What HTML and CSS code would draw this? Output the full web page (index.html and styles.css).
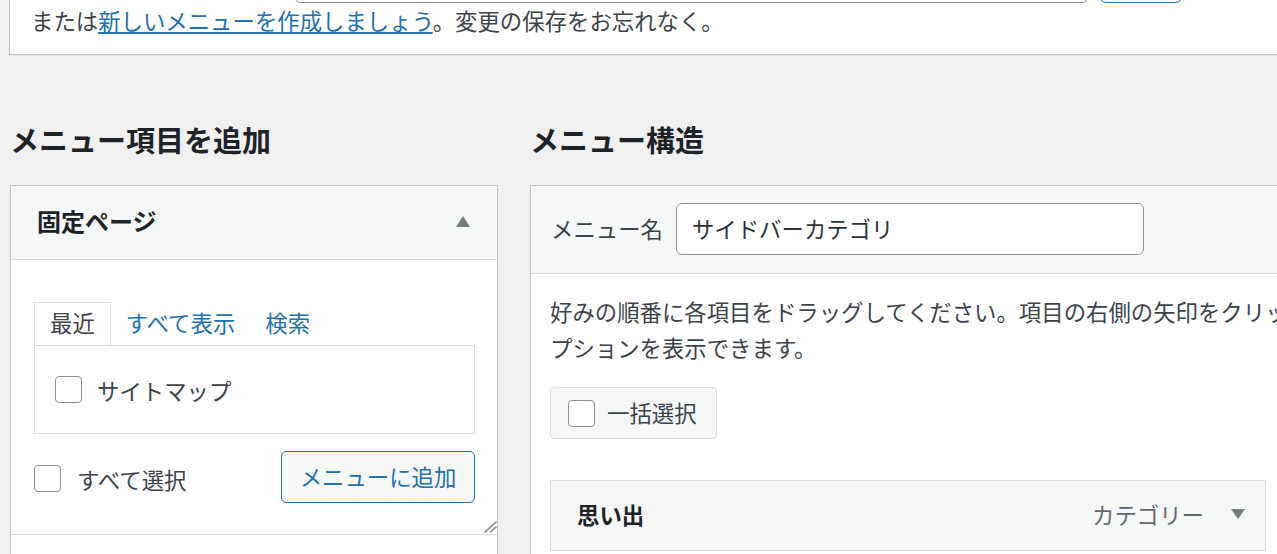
FILE: index.html
```html
<!DOCTYPE html>
<html lang="ja">
<head>
<meta charset="utf-8">
<title>メニュー</title>
<link rel="stylesheet" href="styles.css">
</head>
<body>
<div class="wrap">
  <div class="manage">
    <div class="manage-row">
      <span class="select-box"></span>
      <span class="select-btn"></span>
    </div>
    <p class="manage-text">または<a href="#" class="link">新しいメニューを作成しましょう</a>。変更の保存をお忘れなく。</p>
  </div>

  <div class="columns">
    <div class="side-col">
      <h2 class="col-title">メニュー項目を追加</h2>
      <div class="accordion">
        <div class="acc-title">
          <h3 class="acc-heading">固定ページ</h3>
          <span class="tri-up"></span>
        </div>
        <div class="acc-content">
          <ul class="tabs">
            <li class="tab tab-active">最近</li>
            <li class="tab"><a href="#" class="tab-link">すべて表示</a></li>
            <li class="tab"><a href="#" class="tab-link">検索</a></li>
          </ul>
          <div class="tab-panel">
            <label class="check-label"><span class="cb"></span>サイトマップ</label>
          </div>
          <div class="acc-actions">
            <label class="check-label select-all"><span class="cb"></span>すべて選択</label>
            <button class="btn-add" type="button">メニューに追加</button>
          </div>
          <svg class="resize" width="13" height="12" viewBox="0 0 13 12">
            <line x1="0.5" y1="11.5" x2="12.5" y2="0.5" stroke="#8c8f94" stroke-width="1.6"/>
            <line x1="6" y1="11.5" x2="12.5" y2="5.5" stroke="#8c8f94" stroke-width="1.6"/>
          </svg>
        </div>
        <div class="acc-next"></div>
      </div>
    </div>

    <div class="main-col">
      <h2 class="col-title">メニュー構造</h2>
      <div class="menu-edit">
        <div class="menu-header">
          <label class="menu-name-label">メニュー名</label>
          <input class="menu-name" type="text" value="サイドバーカテゴリ">
        </div>
        <div class="menu-body">
          <p class="instructions">好みの順番に各項目をドラッグしてください。項目の右側の矢印をクリックすると、追加の設定オプションを表示できます。</p>
          <label class="bulk"><span class="cb"></span>一括選択</label>
          <div class="menu-item">
            <span class="item-title">思い出</span>
            <span class="item-controls">
              <span class="item-type">カテゴリー</span>
              <span class="tri-down"></span>
            </span>
          </div>
        </div>
      </div>
    </div>
  </div>
</div>
</body>
</html>
```

FILE: styles.css
```css
html, body {
  margin: 0;
  padding: 0;
}
body {
  background: #f0f0f1;
  color: #3c434a;
  font-family: "Noto Sans CJK JP", "Noto Sans", sans-serif;
  font-size: 22.4px;
  overflow: hidden;
}
.wrap {
  width: 1600px;
}

/* top manage box */
.manage {
  margin: -60px 0 0 9px;
  padding: 0 0 16px 21px;
  background: #fff;
  border: 1px solid #c3c4c7;
  box-shadow: 0 1px 1px rgba(0,0,0,.04);
}
.manage-row {
  height: 62px;
  display: flex;
  align-items: flex-end;
}
.select-box {
  margin-left: 264px;
  width: 793px;
  height: 50px;
  box-sizing: border-box;
  border: 1px solid #8c8f94;
  border-radius: 5px;
}
.select-btn {
  margin-left: 12px;
  width: 82px;
  height: 50px;
  box-sizing: border-box;
  border: 1px solid #2271b1;
  border-radius: 6px;
  background: #f6f7f7;
}
.manage-text {
  margin: -1px 0 0;
  line-height: 36px;
}
.link {
  color: #2271b1;
  text-decoration: underline;
}

/* columns */
.columns {
  display: flex;
  gap: 32px;
  margin-left: 10px;
}
.side-col {
  width: 488px;
  flex: none;
}
.main-col {
  width: 1040px;
  flex: none;
}
.col-title {
  margin: 64px 0 26px;
  font-size: 29px;
  line-height: 40px;
  font-weight: 700;
  color: #1d2327;
}

/* accordion */
.accordion {
  background: #fff;
  border: 1px solid #c3c4c7;
  height: 420px;
}
.acc-title {
  box-sizing: border-box;
  height: 74px;
  padding: 0 27px 3px 26px;
  background: #f6f7f7;
  border-bottom: 1px solid #dcdcde;
  display: flex;
  align-items: center;
  justify-content: space-between;
}
.acc-heading {
  margin: 0;
  font-size: 24px;
  font-weight: 700;
  color: #1d2327;
  line-height: 36px;
}
.tri-up {
  width: 0;
  height: 0;
  border-left: 7px solid transparent;
  border-right: 7px solid transparent;
  border-bottom: 11px solid #787c82;
}
.acc-content {
  position: relative;
  padding: 42px 22px 31px 23px;
  border-bottom: 1px solid #dcdcde;
}
.tabs {
  list-style: none;
  margin: 0;
  padding: 0;
  display: flex;
}
.tab {
  padding: 0 14px 3px;
  line-height: 39px;
  border: 1px solid transparent;
  border-bottom: 0;
}
.tab-active {
  padding: 0 15px 3px;
  border-color: #dcdcde;
  color: #3c434a;
}
.tab-link {
  color: #2271b1;
  text-decoration: none;
}
.tab-panel {
  height: 87px;
  border: 1px solid #dcdcde;
  display: flex;
  align-items: center;
  padding-left: 20px;
}
.check-label {
  display: flex;
  align-items: center;
  gap: 15px;
  line-height: 36px;
}
.cb {
  width: 27px;
  height: 27px;
  box-sizing: border-box;
  border: 1px solid #8c8f94;
  border-radius: 4px;
  background: #fff;
  flex: none;
}
.acc-actions {
  margin-top: 17px;
  height: 52px;
  display: flex;
  align-items: center;
  justify-content: space-between;
}
.select-all {
  gap: 16px;
  margin-top: 3px;
}
.btn-add {
  width: 194px;
  height: 52px;
  box-sizing: border-box;
  border: 1px solid #2271b1;
  border-radius: 5px;
  background: #f6f7f7;
  color: #2271b1;
  font-family: inherit;
  font-size: 22.4px;
  line-height: 36px;
  padding: 0 0 3px;
}
.resize {
  position: absolute;
  right: 0;
  bottom: 1px;
}
.acc-next {
  height: 60px;
}

/* menu structure */
.menu-edit {
  background: #fff;
  border: 1px solid #c3c4c7;
  height: 420px;
}
.menu-header {
  background: #f6f7f7;
  border-bottom: 1px solid #dcdcde;
  padding: 17px 20px 18px;
  display: flex;
  align-items: center;
}
.menu-name-label {
  margin-right: 13px;
  line-height: 36px;
  margin-top: -2px;
}
.menu-name {
  width: 468px;
  height: 52px;
  box-sizing: border-box;
  border: 1px solid #8c8f94;
  border-radius: 6px;
  padding: 0 15px 2px;
  font-family: inherit;
  font-size: 22.4px;
  color: #2c3338;
  background: #fff;
}
.menu-body {
  padding: 19px 19px;
}
.instructions {
  margin: 0;
  line-height: 36px;
  width: 996px;
}
.bulk {
  margin-top: 22px;
  display: inline-flex;
  align-items: center;
  gap: 12px;
  height: 52px;
  box-sizing: border-box;
  padding: 0 19px 2px 17px;
  background: #f6f7f7;
  border: 1px solid #dcdcde;
  border-radius: 4px;
  color: #3c434a;
}
.bulk .cb {
  margin-top: 2px;
}
.menu-item {
  margin-top: 41px;
  width: 716px;
  height: 71px;
  box-sizing: border-box;
  background: #f6f7f7;
  border: 1px solid #dcdcde;
  display: flex;
  align-items: center;
  justify-content: space-between;
  padding: 0 20px 3px 26px;
}
.item-title {
  font-weight: 700;
  color: #1d2327;
}
.item-controls {
  display: flex;
  align-items: center;
  gap: 27px;
}
.item-type {
  color: #646970;
}
.tri-down {
  width: 0;
  height: 0;
  border-left: 7px solid transparent;
  border-right: 7px solid transparent;
  border-top: 10px solid #787c82;
  margin-top: -1px;
}
```
